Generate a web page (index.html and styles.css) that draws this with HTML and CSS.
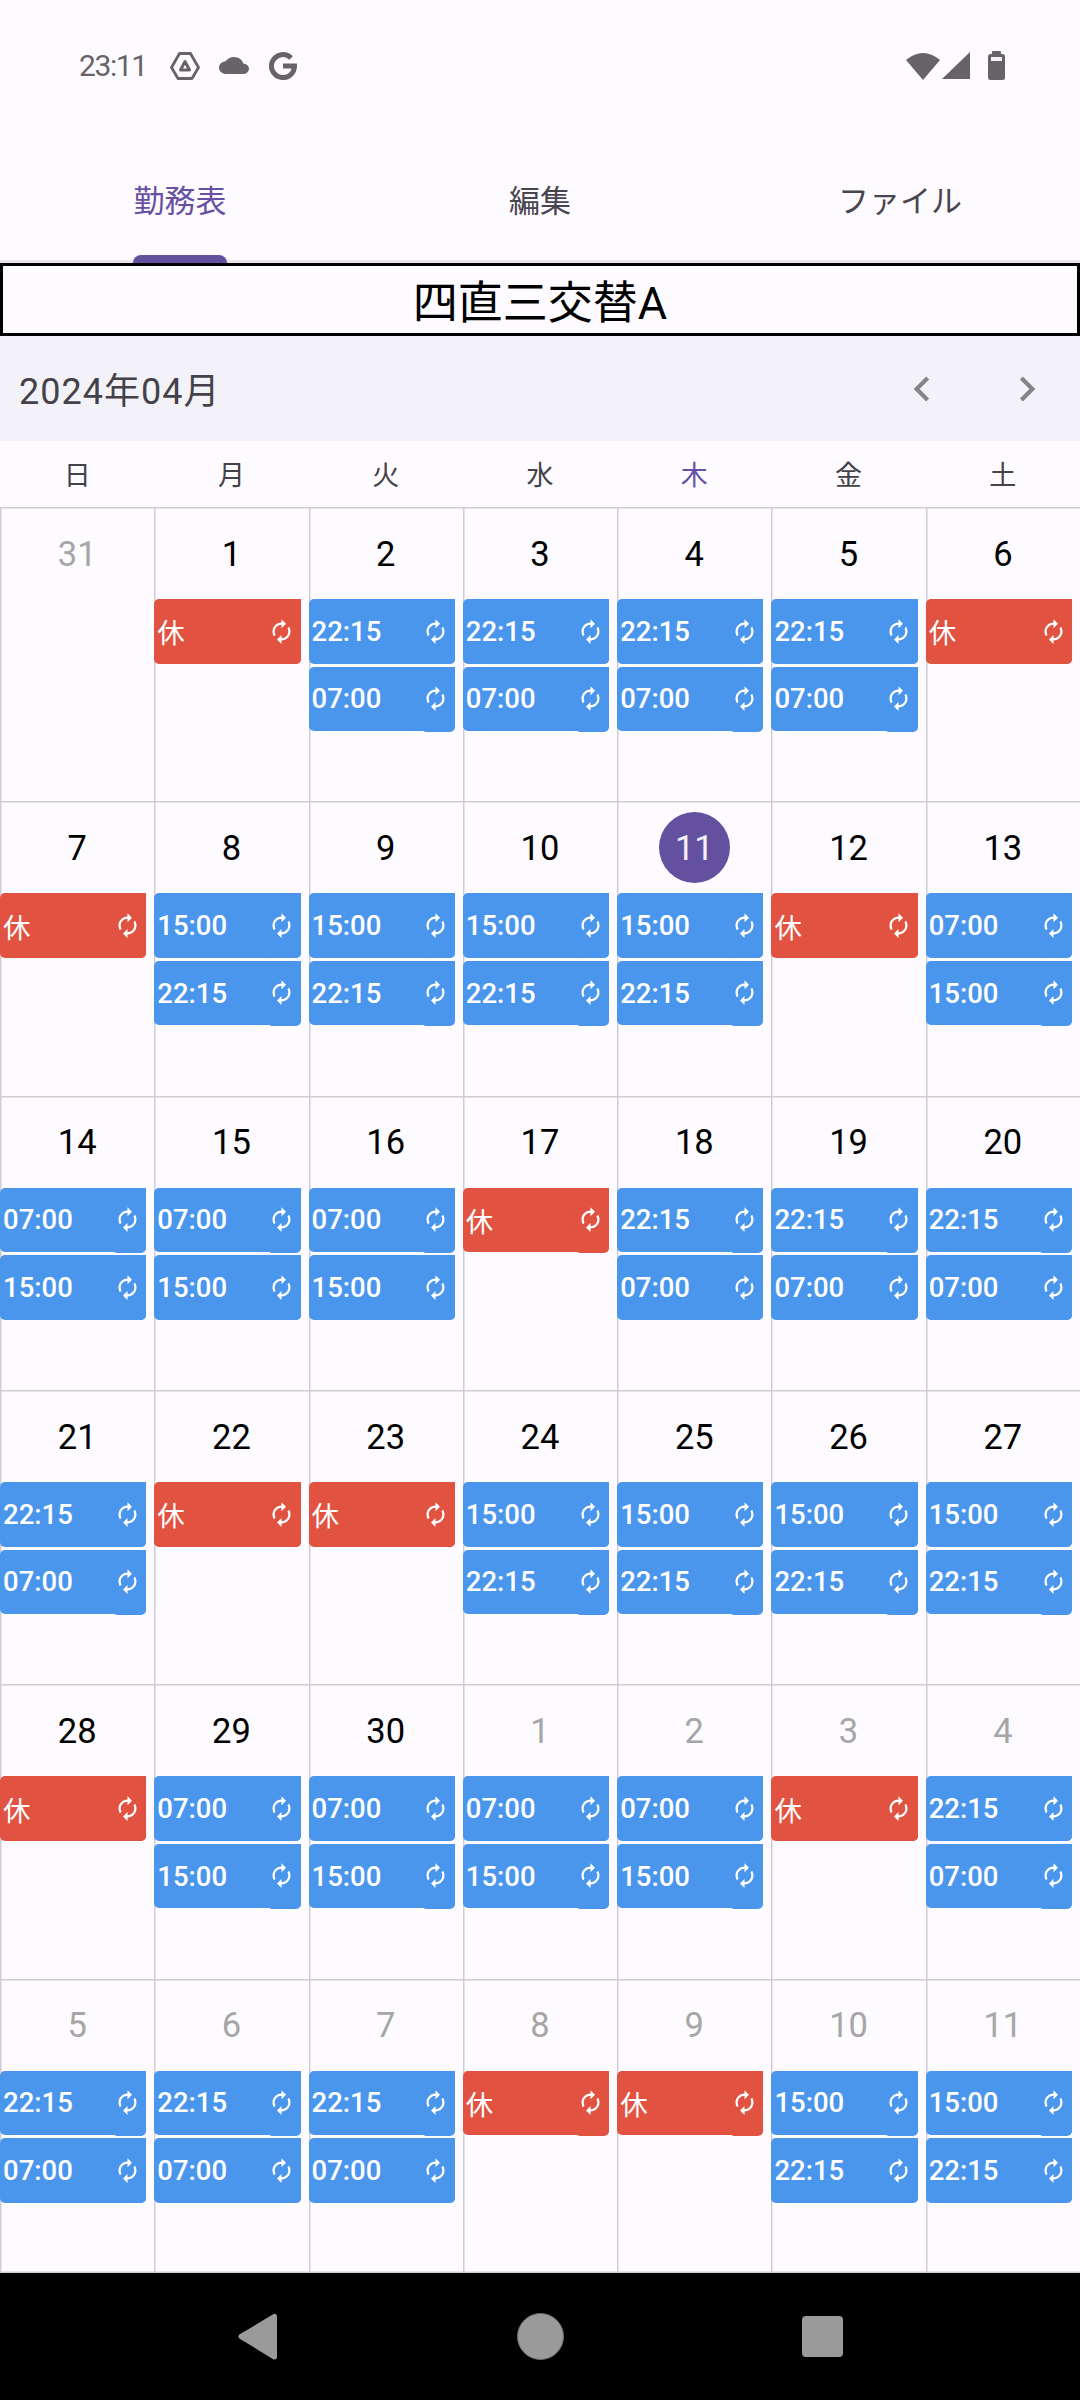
FILE: index.html
```html
<!DOCTYPE html>
<html lang="ja">
<head>
    <meta charset="UTF-8">
    <meta name="viewport" content="width=device-width, initial-scale=1.0">
    <title>勤務表</title>
    <link rel="stylesheet" href="styles.css">
</head>
<body>

    <svg class="defs" aria-hidden="true">
        <symbol id="renew" viewBox="0 0 24 24">
            <path d="M12 6v3l4-4-4-4v3c-4.42 0-8 3.58-8 8 0 1.57.46 3.03 1.24 4.26L6.7 14.8c-.45-.83-.7-1.79-.7-2.8 0-3.31 2.69-6 6-6zm6.76 1.74L17.3 9.2c.44.84.7 1.79.7 2.8 0 3.31-2.69 6-6 6v-3l-4 4 4 4v-3c4.42 0 8-3.58 8-8 0-1.57-.46-3.03-1.24-4.26z"/>
        </symbol>
    </svg>

    <div class="status">
        <span class="time">23:11</span>
        <svg class="ico-drive" width="30" height="28" viewBox="0 0 30 28">
            <path d="M9.5 1.5H20.5L28.5 15.5L22 26.5H8L1.5 15.5Z" fill="none" stroke="#666467" stroke-width="2.8" stroke-linejoin="round"/>
            <path d="M15 9.5L10.5 18H19.5Z" fill="none" stroke="#666467" stroke-width="3" stroke-linejoin="round"/>
        </svg>
        <svg class="ico-cloud" width="30" height="17" viewBox="0 4 24 16" preserveAspectRatio="none">
            <path fill="#666467" d="M19.35 10.04C18.67 6.59 15.64 4 12 4 9.11 4 6.6 5.64 5.35 8.04 2.34 8.36 0 10.91 0 14c0 3.31 2.69 6 6 6h13c2.76 0 5-2.24 5-5 0-2.64-2.05-4.78-4.65-4.96z"/>
        </svg>
        <svg class="ico-g" width="28" height="28" viewBox="0 0 28 28">
            <path d="M22.1 5.9A11.5 11.5 0 1 0 25.5 14H14" fill="none" stroke="#666467" stroke-width="5"/>
        </svg>
        <div class="status-right">
            <svg class="ico-wifi" width="34" height="28" viewBox="0 0 34 28">
                <path fill="#666467" d="M0 8Q17 -6 34 8L17 28Z"/>
            </svg>
            <svg class="ico-signal" width="28" height="27" viewBox="0 0 28 27">
                <path fill="#666467" d="M28 0V27H0Z"/>
            </svg>
            <svg class="ico-battery" width="17" height="29" viewBox="0 0 17 29">
                <rect x="4" y="0" width="9" height="4" rx="1" fill="#666467"/>
                <rect x="0" y="3" width="17" height="26" rx="2.5" fill="#666467"/>
                <rect x="3" y="6" width="11" height="4" fill="#f4f2f6"/>
            </svg>
        </div>
    </div>

    <div class="tabs">
        <div class="tab active"><span class="tab-label">勤務表</span><span class="tab-bar"></span></div>
        <div class="tab"><span class="tab-label">編集</span><span class="tab-bar"></span></div>
        <div class="tab"><span class="tab-label">ファイル</span><span class="tab-bar"></span></div>
    </div>

    <div class="title">四直三交替A</div>

    <div class="month">
        <span class="month-label">2024年04月</span>
        <div class="month-nav">
            <svg width="50" height="50" viewBox="0 0 24 24"><path d="M15.41 7.41L14 6l-6 6 6 6 1.41-1.41L10.83 12z"/></svg>
            <svg width="50" height="50" viewBox="0 0 24 24"><path d="M10 6L8.59 7.41 13.17 12l-4.58 4.59L10 18l6-6z"/></svg>
        </div>
    </div>

    <div class="weekdays">
        <span>日</span><span>月</span><span>火</span><span>水</span><span class="now">木</span><span>金</span><span>土</span>
    </div>

    <div class="calendar">
        <!-- week 1 -->
        <div class="cell other"><div class="day">31</div></div>
        <div class="cell"><div class="day">1</div><div class="shift off">休<span class="repeat"><svg><use href="#renew"/></svg></span></div></div>
        <div class="cell"><div class="day">2</div><div class="shift">22:15<span class="repeat"><svg><use href="#renew"/></svg></span></div><div class="shift">07:00<span class="repeat"><svg><use href="#renew"/></svg></span></div></div>
        <div class="cell"><div class="day">3</div><div class="shift">22:15<span class="repeat"><svg><use href="#renew"/></svg></span></div><div class="shift">07:00<span class="repeat"><svg><use href="#renew"/></svg></span></div></div>
        <div class="cell"><div class="day">4</div><div class="shift">22:15<span class="repeat"><svg><use href="#renew"/></svg></span></div><div class="shift">07:00<span class="repeat"><svg><use href="#renew"/></svg></span></div></div>
        <div class="cell"><div class="day">5</div><div class="shift">22:15<span class="repeat"><svg><use href="#renew"/></svg></span></div><div class="shift">07:00<span class="repeat"><svg><use href="#renew"/></svg></span></div></div>
        <div class="cell"><div class="day">6</div><div class="shift off">休<span class="repeat"><svg><use href="#renew"/></svg></span></div></div>
        <!-- week 2 -->
        <div class="cell"><div class="day">7</div><div class="shift off">休<span class="repeat"><svg><use href="#renew"/></svg></span></div></div>
        <div class="cell"><div class="day">8</div><div class="shift">15:00<span class="repeat"><svg><use href="#renew"/></svg></span></div><div class="shift">22:15<span class="repeat"><svg><use href="#renew"/></svg></span></div></div>
        <div class="cell"><div class="day">9</div><div class="shift">15:00<span class="repeat"><svg><use href="#renew"/></svg></span></div><div class="shift">22:15<span class="repeat"><svg><use href="#renew"/></svg></span></div></div>
        <div class="cell"><div class="day">10</div><div class="shift">15:00<span class="repeat"><svg><use href="#renew"/></svg></span></div><div class="shift">22:15<span class="repeat"><svg><use href="#renew"/></svg></span></div></div>
        <div class="cell today"><div class="day">11</div><div class="shift">15:00<span class="repeat"><svg><use href="#renew"/></svg></span></div><div class="shift">22:15<span class="repeat"><svg><use href="#renew"/></svg></span></div></div>
        <div class="cell"><div class="day">12</div><div class="shift off">休<span class="repeat"><svg><use href="#renew"/></svg></span></div></div>
        <div class="cell"><div class="day">13</div><div class="shift">07:00<span class="repeat"><svg><use href="#renew"/></svg></span></div><div class="shift">15:00<span class="repeat"><svg><use href="#renew"/></svg></span></div></div>
        <!-- week 3 -->
        <div class="cell"><div class="day">14</div><div class="shift">07:00<span class="repeat"><svg><use href="#renew"/></svg></span></div><div class="shift">15:00<span class="repeat"><svg><use href="#renew"/></svg></span></div></div>
        <div class="cell"><div class="day">15</div><div class="shift">07:00<span class="repeat"><svg><use href="#renew"/></svg></span></div><div class="shift">15:00<span class="repeat"><svg><use href="#renew"/></svg></span></div></div>
        <div class="cell"><div class="day">16</div><div class="shift">07:00<span class="repeat"><svg><use href="#renew"/></svg></span></div><div class="shift">15:00<span class="repeat"><svg><use href="#renew"/></svg></span></div></div>
        <div class="cell"><div class="day">17</div><div class="shift off">休<span class="repeat"><svg><use href="#renew"/></svg></span></div></div>
        <div class="cell"><div class="day">18</div><div class="shift">22:15<span class="repeat"><svg><use href="#renew"/></svg></span></div><div class="shift">07:00<span class="repeat"><svg><use href="#renew"/></svg></span></div></div>
        <div class="cell"><div class="day">19</div><div class="shift">22:15<span class="repeat"><svg><use href="#renew"/></svg></span></div><div class="shift">07:00<span class="repeat"><svg><use href="#renew"/></svg></span></div></div>
        <div class="cell"><div class="day">20</div><div class="shift">22:15<span class="repeat"><svg><use href="#renew"/></svg></span></div><div class="shift">07:00<span class="repeat"><svg><use href="#renew"/></svg></span></div></div>
        <!-- week 4 -->
        <div class="cell"><div class="day">21</div><div class="shift">22:15<span class="repeat"><svg><use href="#renew"/></svg></span></div><div class="shift">07:00<span class="repeat"><svg><use href="#renew"/></svg></span></div></div>
        <div class="cell"><div class="day">22</div><div class="shift off">休<span class="repeat"><svg><use href="#renew"/></svg></span></div></div>
        <div class="cell"><div class="day">23</div><div class="shift off">休<span class="repeat"><svg><use href="#renew"/></svg></span></div></div>
        <div class="cell"><div class="day">24</div><div class="shift">15:00<span class="repeat"><svg><use href="#renew"/></svg></span></div><div class="shift">22:15<span class="repeat"><svg><use href="#renew"/></svg></span></div></div>
        <div class="cell"><div class="day">25</div><div class="shift">15:00<span class="repeat"><svg><use href="#renew"/></svg></span></div><div class="shift">22:15<span class="repeat"><svg><use href="#renew"/></svg></span></div></div>
        <div class="cell"><div class="day">26</div><div class="shift">15:00<span class="repeat"><svg><use href="#renew"/></svg></span></div><div class="shift">22:15<span class="repeat"><svg><use href="#renew"/></svg></span></div></div>
        <div class="cell"><div class="day">27</div><div class="shift">15:00<span class="repeat"><svg><use href="#renew"/></svg></span></div><div class="shift">22:15<span class="repeat"><svg><use href="#renew"/></svg></span></div></div>
        <!-- week 5 -->
        <div class="cell"><div class="day">28</div><div class="shift off">休<span class="repeat"><svg><use href="#renew"/></svg></span></div></div>
        <div class="cell"><div class="day">29</div><div class="shift">07:00<span class="repeat"><svg><use href="#renew"/></svg></span></div><div class="shift">15:00<span class="repeat"><svg><use href="#renew"/></svg></span></div></div>
        <div class="cell"><div class="day">30</div><div class="shift">07:00<span class="repeat"><svg><use href="#renew"/></svg></span></div><div class="shift">15:00<span class="repeat"><svg><use href="#renew"/></svg></span></div></div>
        <div class="cell other"><div class="day">1</div><div class="shift">07:00<span class="repeat"><svg><use href="#renew"/></svg></span></div><div class="shift">15:00<span class="repeat"><svg><use href="#renew"/></svg></span></div></div>
        <div class="cell other"><div class="day">2</div><div class="shift">07:00<span class="repeat"><svg><use href="#renew"/></svg></span></div><div class="shift">15:00<span class="repeat"><svg><use href="#renew"/></svg></span></div></div>
        <div class="cell other"><div class="day">3</div><div class="shift off">休<span class="repeat"><svg><use href="#renew"/></svg></span></div></div>
        <div class="cell other"><div class="day">4</div><div class="shift">22:15<span class="repeat"><svg><use href="#renew"/></svg></span></div><div class="shift">07:00<span class="repeat"><svg><use href="#renew"/></svg></span></div></div>
        <!-- week 6 -->
        <div class="cell other"><div class="day">5</div><div class="shift">22:15<span class="repeat"><svg><use href="#renew"/></svg></span></div><div class="shift">07:00<span class="repeat"><svg><use href="#renew"/></svg></span></div></div>
        <div class="cell other"><div class="day">6</div><div class="shift">22:15<span class="repeat"><svg><use href="#renew"/></svg></span></div><div class="shift">07:00<span class="repeat"><svg><use href="#renew"/></svg></span></div></div>
        <div class="cell other"><div class="day">7</div><div class="shift">22:15<span class="repeat"><svg><use href="#renew"/></svg></span></div><div class="shift">07:00<span class="repeat"><svg><use href="#renew"/></svg></span></div></div>
        <div class="cell other"><div class="day">8</div><div class="shift off">休<span class="repeat"><svg><use href="#renew"/></svg></span></div></div>
        <div class="cell other"><div class="day">9</div><div class="shift off">休<span class="repeat"><svg><use href="#renew"/></svg></span></div></div>
        <div class="cell other"><div class="day">10</div><div class="shift">15:00<span class="repeat"><svg><use href="#renew"/></svg></span></div><div class="shift">22:15<span class="repeat"><svg><use href="#renew"/></svg></span></div></div>
        <div class="cell other"><div class="day">11</div><div class="shift">15:00<span class="repeat"><svg><use href="#renew"/></svg></span></div><div class="shift">22:15<span class="repeat"><svg><use href="#renew"/></svg></span></div></div>
    </div>

    <div class="navbar">
        <svg width="47" height="47" viewBox="0 0 47 47"><path d="M39.5 3.5V44L6 23.5Z" fill="#9a9a9a" stroke="#9a9a9a" stroke-width="5" stroke-linejoin="round"/></svg>
        <span class="nav-home"></span>
        <span class="nav-square-box"><span class="nav-square"></span></span>
    </div>

</body>
</html>
```

FILE: styles.css
```css
* {
    box-sizing: border-box;
}
html, body {
    margin: 0;
    padding: 0;
}
body {
    width: 1080px;
    height: 2400px;
    display: flex;
    flex-direction: column;
    background-color: #fdfbff;
    font-family: Roboto, "Noto Sans CJK JP", sans-serif;
    overflow: hidden;
}
.defs {
    width: 0;
    height: 0;
    position: absolute;
}

/* status bar */
.status {
    height: 131px;
    flex: none;
    display: flex;
    align-items: center;
    padding: 0 75px 0 79px;
    color: #666467;
}
.time {
    font-size: 30px;
    letter-spacing: -1.4px;
    width: 91px;
}
.ico-cloud {
    margin-left: 19px;
}
.ico-g {
    margin-left: 20px;
}
.status-right {
    margin-left: auto;
    display: flex;
    align-items: center;
}
.ico-signal {
    margin-left: 2px;
}
.ico-battery {
    margin-left: 18px;
}

/* tabs */
.tabs {
    height: 132px;
    flex: none;
    display: flex;
    box-shadow: inset 0 -3px 0 #e8e6ea;
}
.tab {
    flex: 1;
    display: flex;
    flex-direction: column;
    align-items: center;
    color: #49454f;
}
.tab-label {
    flex: 1;
    display: flex;
    align-items: center;
    font-size: 31px;
    padding-top: 11px;
}
.tab-bar {
    width: 94px;
    height: 8px;
    border-radius: 8px 8px 0 0;
}
.tab.active {
    color: #6750a4;
}
.tab.active .tab-bar {
    background: #6351a0;
}

.title {
    height: 73px;
    flex: none;
    border: 3px solid #000;
    color: #000;
    font-size: 45px;
    display: flex;
    align-items: center;
    justify-content: center;
}

/* month header */
.month {
    height: 105px;
    flex: none;
    display: flex;
    align-items: center;
    justify-content: space-between;
    padding: 0 28px 0 19px;
    background: #f4f2f9;
}
.month-label {
    font-size: 36px;
    letter-spacing: 1px;
    color: #444248;
    margin-top: -2px;
}
.month-nav {
    display: flex;
    gap: 55px;
}
.month-nav svg {
    fill: #86838c;
}

.weekdays {
    height: 66px;
    flex: none;
    display: grid;
    grid-template-columns: repeat(7, 1fr);
    align-items: center;
    text-align: center;
    font-size: 27px;
    color: #444248;
}
.weekdays span {
    margin-top: -2px;
}
.weekdays .now {
    color: #6750a4;
}

/* calendar */
.calendar {
    flex: 1;
    display: grid;
    grid-template-columns: repeat(7, 1fr);
    grid-template-rows: repeat(6, 1fr);
    box-shadow: inset 0 -1.5px 0 #cfccd6;
}
.cell {
    box-shadow: inset 1.5px 1.5px 0 #cfccd6;
    min-width: 0;
}
.day {
    width: 71px;
    height: 71px;
    margin: 11px auto 10px;
    border-radius: 50%;
    display: flex;
    align-items: center;
    justify-content: center;
    font-size: 34.5px;
    color: #000;
}
.other .day {
    color: #a6a6a6;
}
.today .day {
    background: #63519f;
    color: #f4f0f8;
}
.shift {
    height: 64.5px;
    margin: 0 8px 3px 0;
    display: flex;
    align-items: center;
    justify-content: space-between;
    padding-left: 3px;
    background: #4a96ec;
    border-radius: 5px;
    color: #fff;
    font-size: 27.5px;
    font-weight: 500;
}
.shift.off {
    background: #e25241;
    font-weight: 400;
}
.repeat {
    align-self: stretch;
    width: 34px;
    margin-bottom: -0.5px;
    padding-left: 1.5px;
    display: flex;
    align-items: center;
    background: inherit;
    border-radius: 0 0 5px 5px;
}
.repeat svg {
    width: 27px;
    height: 27px;
    margin-top: -1px;
    fill: #fff;
}

/* nav bar */
.navbar {
    height: 127px;
    flex: none;
    display: flex;
    align-items: center;
    justify-content: center;
    gap: 235px;
    background: #000;
}
.nav-home {
    width: 47px;
    height: 47px;
    border-radius: 50%;
    background: #9a9a9a;
    border: 1.5px solid #6f6f6f;
}
.nav-square-box {
    width: 47px;
    display: flex;
    justify-content: center;
}
.nav-square {
    width: 41px;
    height: 41px;
    border-radius: 4px;
    background: #9a9a9a;
}
```
